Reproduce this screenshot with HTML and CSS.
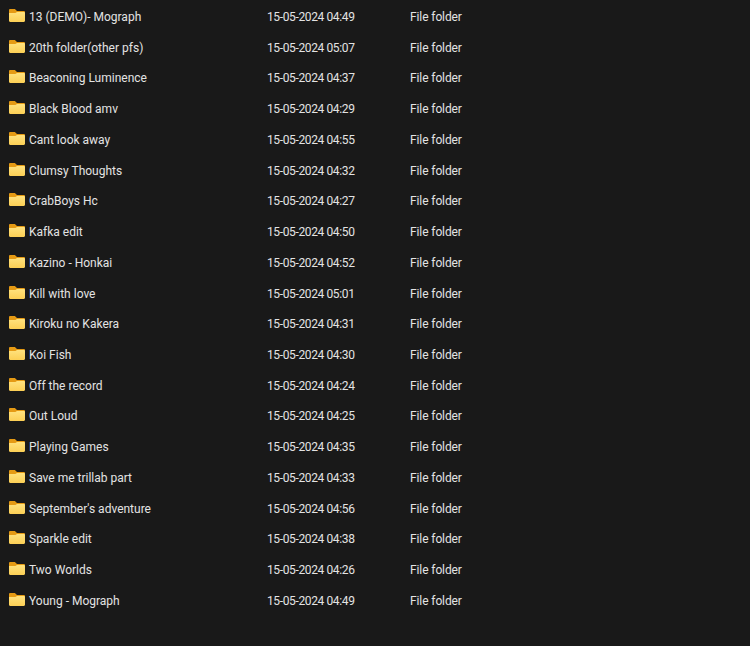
FILE: index.html
```html
<!DOCTYPE html>
<html lang="en">
<head>
<meta charset="utf-8">
<title>Folder list</title>
<link rel="stylesheet" href="styles.css">
</head>
<body>
<svg class="defs" width="0" height="0" aria-hidden="true">
  <defs>
    <linearGradient id="fg" x1="0" y1="0" x2="0" y2="1">
      <stop offset="0" stop-color="#ffe27e"/>
      <stop offset="1" stop-color="#fccf55"/>
    </linearGradient>
    <symbol id="folder" viewBox="0 0 16 13" preserveAspectRatio="none">
      <path d="M0 1.2C0 .5.5 0 1.2 0h4.2c.4 0 .7.1 1 .4L8 2h6.8c.7 0 1.2.5 1.2 1.2V5H0z" fill="#e59a14"/>
      <path d="M0 4h6.400L8 3h6.800c.7 0 1.200.5 1.200 1.200v7.600c0 .7-.5 1.200-1.200 1.200H1.200C.5 13 0 12.500 0 11.800z" fill="url(#fg)"/>
    </symbol>
  </defs>
</svg>
<main class="list">
  <div class="row"><div class="name"><svg class="icon"><use href="#folder"/></svg>13 (DEMO)- Mograph</div><div class="date">15-05-2024 04:49</div><div class="type">File folder</div></div>
  <div class="row"><div class="name"><svg class="icon"><use href="#folder"/></svg>20th folder(other pfs)</div><div class="date">15-05-2024 05:07</div><div class="type">File folder</div></div>
  <div class="row"><div class="name"><svg class="icon"><use href="#folder"/></svg>Beaconing Luminence</div><div class="date">15-05-2024 04:37</div><div class="type">File folder</div></div>
  <div class="row"><div class="name"><svg class="icon"><use href="#folder"/></svg>Black Blood amv</div><div class="date">15-05-2024 04:29</div><div class="type">File folder</div></div>
  <div class="row"><div class="name"><svg class="icon"><use href="#folder"/></svg>Cant look away</div><div class="date">15-05-2024 04:55</div><div class="type">File folder</div></div>
  <div class="row"><div class="name"><svg class="icon"><use href="#folder"/></svg>Clumsy Thoughts</div><div class="date">15-05-2024 04:32</div><div class="type">File folder</div></div>
  <div class="row"><div class="name"><svg class="icon"><use href="#folder"/></svg>CrabBoys Hc</div><div class="date">15-05-2024 04:27</div><div class="type">File folder</div></div>
  <div class="row"><div class="name"><svg class="icon"><use href="#folder"/></svg>Kafka edit</div><div class="date">15-05-2024 04:50</div><div class="type">File folder</div></div>
  <div class="row"><div class="name"><svg class="icon"><use href="#folder"/></svg>Kazino - Honkai</div><div class="date">15-05-2024 04:52</div><div class="type">File folder</div></div>
  <div class="row"><div class="name"><svg class="icon"><use href="#folder"/></svg>Kill with love</div><div class="date">15-05-2024 05:01</div><div class="type">File folder</div></div>
  <div class="row"><div class="name"><svg class="icon"><use href="#folder"/></svg>Kiroku no Kakera</div><div class="date">15-05-2024 04:31</div><div class="type">File folder</div></div>
  <div class="row"><div class="name"><svg class="icon"><use href="#folder"/></svg>Koi Fish</div><div class="date">15-05-2024 04:30</div><div class="type">File folder</div></div>
  <div class="row"><div class="name"><svg class="icon"><use href="#folder"/></svg>Off the record</div><div class="date">15-05-2024 04:24</div><div class="type">File folder</div></div>
  <div class="row"><div class="name"><svg class="icon"><use href="#folder"/></svg>Out Loud</div><div class="date">15-05-2024 04:25</div><div class="type">File folder</div></div>
  <div class="row"><div class="name"><svg class="icon"><use href="#folder"/></svg>Playing Games</div><div class="date">15-05-2024 04:35</div><div class="type">File folder</div></div>
  <div class="row"><div class="name"><svg class="icon"><use href="#folder"/></svg>Save me trillab part</div><div class="date">15-05-2024 04:33</div><div class="type">File folder</div></div>
  <div class="row"><div class="name"><svg class="icon"><use href="#folder"/></svg>September's adventure</div><div class="date">15-05-2024 04:56</div><div class="type">File folder</div></div>
  <div class="row"><div class="name"><svg class="icon"><use href="#folder"/></svg>Sparkle edit</div><div class="date">15-05-2024 04:38</div><div class="type">File folder</div></div>
  <div class="row"><div class="name"><svg class="icon"><use href="#folder"/></svg>Two Worlds</div><div class="date">15-05-2024 04:26</div><div class="type">File folder</div></div>
  <div class="row"><div class="name"><svg class="icon"><use href="#folder"/></svg>Young - Mograph</div><div class="date">15-05-2024 04:49</div><div class="type">File folder</div></div>
</main>
</body>
</html>
```
FILE: styles.css
```css
html, body {
  margin: 0;
  height: 100%;
  background: #191919;
}
body {
  overflow: hidden;
  color: #e3e3e3;
  font-family: Roboto, "Noto Sans", sans-serif;
  font-size: 12px;
}
.defs {
  display: block;
  height: 0;
}
.list {
  display: grid;
  grid-auto-rows: 30.72px;
  padding-top: 1.7px;
  padding-left: 9px;
}
.row {
  display: grid;
  grid-template-columns: 258px 143px 1fr;
  align-items: center;
  white-space: nowrap;
}
.name {
  display: flex;
  align-items: center;
  gap: 4px;
}
.date {
  letter-spacing: -0.37px;
}
.type {
  letter-spacing: -0.1px;
}
.icon {
  width: 16px;
  height: 13px;
  margin-top: -3px;
}
```
